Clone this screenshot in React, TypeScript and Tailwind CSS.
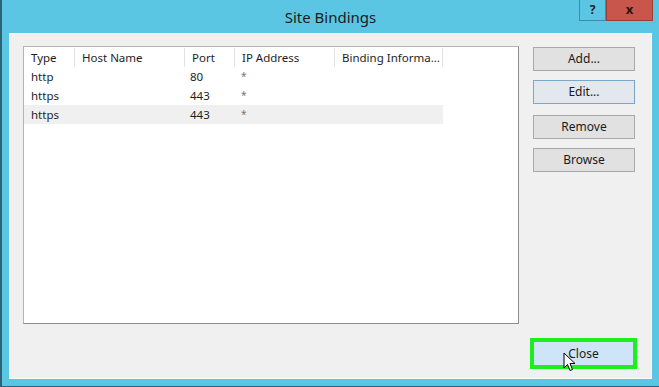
import React from 'react'

const font = { fontFamily: '"Noto Sans", "Open Sans", Arial, sans-serif' }

const columns = [
  { label: 'Type', w: 'w-[51px]' },
  { label: 'Host Name', w: 'w-[110px]' },
  { label: 'Port', w: 'w-[50px]' },
  { label: 'IP Address', w: 'w-[100px]' },
  { label: 'Binding Informa...', w: 'w-[108px]' },
]

const rows = [
  { type: 'http', port: '80', ip: '*', sel: false },
  { type: 'https', port: '443', ip: '*', sel: false },
  { type: 'https', port: '443', ip: '*', sel: true },
]

function SideButton({ label, focused }: { label: string; focused?: boolean }) {
  return (
    <button
      className={
        'w-[102px] h-[24px] text-[12px] text-[#1a1a1a] border ' +
        (focused ? 'bg-[#e3e8ee] border-[#7aa7c9]' : 'bg-[#e1e1e1] border-[#a8a8a8]')
      }
    >
      {label}
    </button>
  )
}

export default function App() {
  return (
    <div className="w-[659px] h-[387px] bg-[#5bc6e4] border-l-2 border-b border-[#2c6275] flex flex-col" style={font}>
      {/* title bar */}
      <div className="h-[33px] flex items-start relative shrink-0">
        <div className="flex-1 text-center text-[15px] text-[#1b1b1b] pt-[6px] pl-[80px]">Site Bindings</div>
        <div className="flex mr-[6px]">
          <div className="w-[27px] h-[21px] border border-[#3b8fa8] border-t-0 flex items-center justify-center text-[12px] font-bold text-[#222]">?</div>
          <div className="w-[47px] h-[21px] bg-[#c8564b] border border-[#9a3d34] border-t-0 flex items-center justify-center text-[13px] font-bold text-[#2a1212]">x</div>
        </div>
      </div>

      {/* body */}
      <div className="flex-1 mx-[7px] mb-[7px] bg-[#f0f0f0] border border-[#fafafa] flex flex-col">
        <div className="flex flex-1 pt-[12px] pl-[13px]">
          {/* list */}
          <div className="w-[496px] h-[278px] bg-white border border-[#8d8d8d] border-t-[#b5b5b5] border-l-[#b5b5b5] pt-[1px]">
            <div className="flex h-[19px] text-[11.5px] text-[#1e1e1e]">
              {columns.map((c) => (
                <div key={c.label} className={`${c.w} border-r border-[#e2e2e2] pl-[7px] leading-[19px] whitespace-nowrap overflow-hidden`}>
                  {c.label}
                </div>
              ))}
            </div>
            {rows.map((r, i) => (
              <div key={i} className={`flex h-[19px] w-[419px] text-[11.5px] text-[#1e1e1e] leading-[19px] ${r.sel ? 'bg-[#f0f0f0]' : ''}`}>
                <div className="w-[51px] pl-[7px]">{r.type}</div>
                <div className="w-[110px]" />
                <div className="w-[50px] pl-[5px]">{r.port}</div>
                <div className="w-[100px] pl-[6px] text-[10px] text-[#777]">{r.ip}</div>
              </div>
            ))}
          </div>

          {/* side buttons */}
          <div className="flex flex-col ml-[14px] mt-[1px]">
            <SideButton label="Add..." />
            <div className="h-[9px]" />
            <SideButton label="Edit..." focused />
            <div className="h-[11px]" />
            <SideButton label="Remove" />
            <div className="h-[9px]" />
            <SideButton label="Browse" />
          </div>
        </div>

        {/* footer */}
        <div className="flex justify-end pr-[14px] pb-[9px]">
          <div className="relative w-[107px] h-[31px] border-[4px] border-[#19f01e] bg-[#cde5f7] flex items-center justify-center text-[12px] text-[#1a1a1a]">
            Close
            <svg className="absolute left-[29px] top-[10px]" width="13" height="20" viewBox="0 0 13 20">
              <path d="M1 1 L1 16 L4.5 12.5 L7 18.5 L9.5 17.5 L7 11.5 L12 11.5 Z" fill="white" stroke="black" strokeWidth="1" strokeLinejoin="round" />
            </svg>
          </div>
        </div>
      </div>
    </div>
  )
}
